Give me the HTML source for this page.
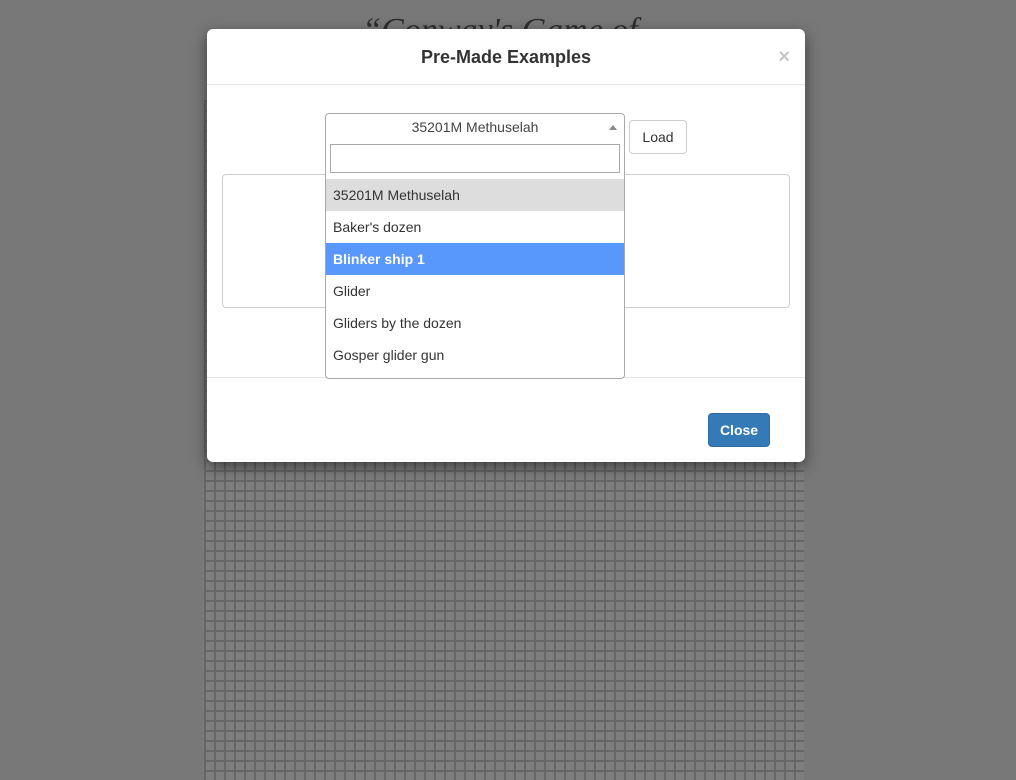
<!DOCTYPE html>
<html><head><style>
html,body{margin:0;padding:0;width:1016px;height:779px;overflow:hidden;background:#787878;font-family:"Liberation Sans",sans-serif;}
.title{position:absolute;left:330px;top:12px;width:340px;text-align:center;font:italic 34px "Liberation Serif",serif;color:#2e2e2e;}
.grid{position:absolute;left:204px;top:100px;width:600px;height:680px;background-color:#7e7e7e;
background-image:linear-gradient(to right,#666 2px,transparent 2px),linear-gradient(to bottom,#666 2px,transparent 2px);background-size:10px 10px;}
.modal{position:absolute;left:207px;top:29px;width:598px;height:433px;background:#fff;border-radius:6px;box-shadow:0 5px 15px rgba(0,0,0,.5);}
.hdr{height:55px;border-bottom:1px solid #e5e5e5;text-align:center;line-height:56px;font-size:18px;font-weight:bold;color:#333;position:relative;}
.x{position:absolute;right:15px;top:0;font-size:20px;color:#c6c6c6;font-weight:bold;}
.sel{position:absolute;left:118px;top:84px;width:298px;height:26px;border:1px solid #aaa;border-radius:4px 4px 0 0;text-align:center;line-height:27px;font-size:14px;color:#444;}
.sel .arr{position:absolute;right:7px;top:11px;width:0;height:0;border-left:4px solid transparent;border-right:4px solid transparent;border-bottom:5px solid #888;}
.load{position:absolute;left:422px;top:91px;width:58px;height:34px;border:1px solid #ccc;border-radius:4px;text-align:center;line-height:32px;font-size:14px;color:#333;box-sizing:border-box;}
.ta{position:absolute;left:15px;top:145px;width:566px;height:132px;border:1px solid #ccc;border-radius:4px;}
.foot{position:absolute;left:0;top:348px;width:598px;border-top:1px solid #e5e5e5;}
.close{position:absolute;left:501px;top:384px;width:62px;height:34px;background:#337ab7;border:1px solid #2e6da4;border-radius:4px;box-sizing:border-box;color:#fff;font-size:14px;font-weight:bold;text-align:center;line-height:32px;}
.dd{position:absolute;left:118px;top:111px;width:298px;height:238px;border:1px solid #aaa;border-top:none;border-radius:0 0 4px 4px;background:#fff;}
.search{position:absolute;left:4px;top:4px;width:290px;height:29px;border:1px solid #aaa;box-sizing:border-box;}
.opt{position:absolute;left:0;width:298px;height:32px;line-height:32px;padding-left:7px;box-sizing:border-box;font-size:14px;color:#333;}
</style></head><body>
<div class="grid"></div>
<div class="title">“Conway's Game of Life”</div>
<div class="modal">
 <div class="hdr">Pre-Made Examples<span class="x">×</span></div>
 <div class="ta"></div>
 <div class="sel">35201M Methuselah<span class="arr"></span></div>
 <div class="load">Load</div>
 <div class="foot"></div>
 <div class="close">Close</div>
 <div class="dd">
  <div class="search"></div>
  <div class="opt" style="top:39px;background:#ddd">35201M Methuselah</div>
  <div class="opt" style="top:71px">Baker's dozen</div>
  <div class="opt" style="top:103px;background:#5897fb;color:#fff;font-weight:bold">Blinker ship 1</div>
  <div class="opt" style="top:135px">Glider</div>
  <div class="opt" style="top:167px">Gliders by the dozen</div>
  <div class="opt" style="top:199px">Gosper glider gun</div>
 </div>
</div>
</body></html>
